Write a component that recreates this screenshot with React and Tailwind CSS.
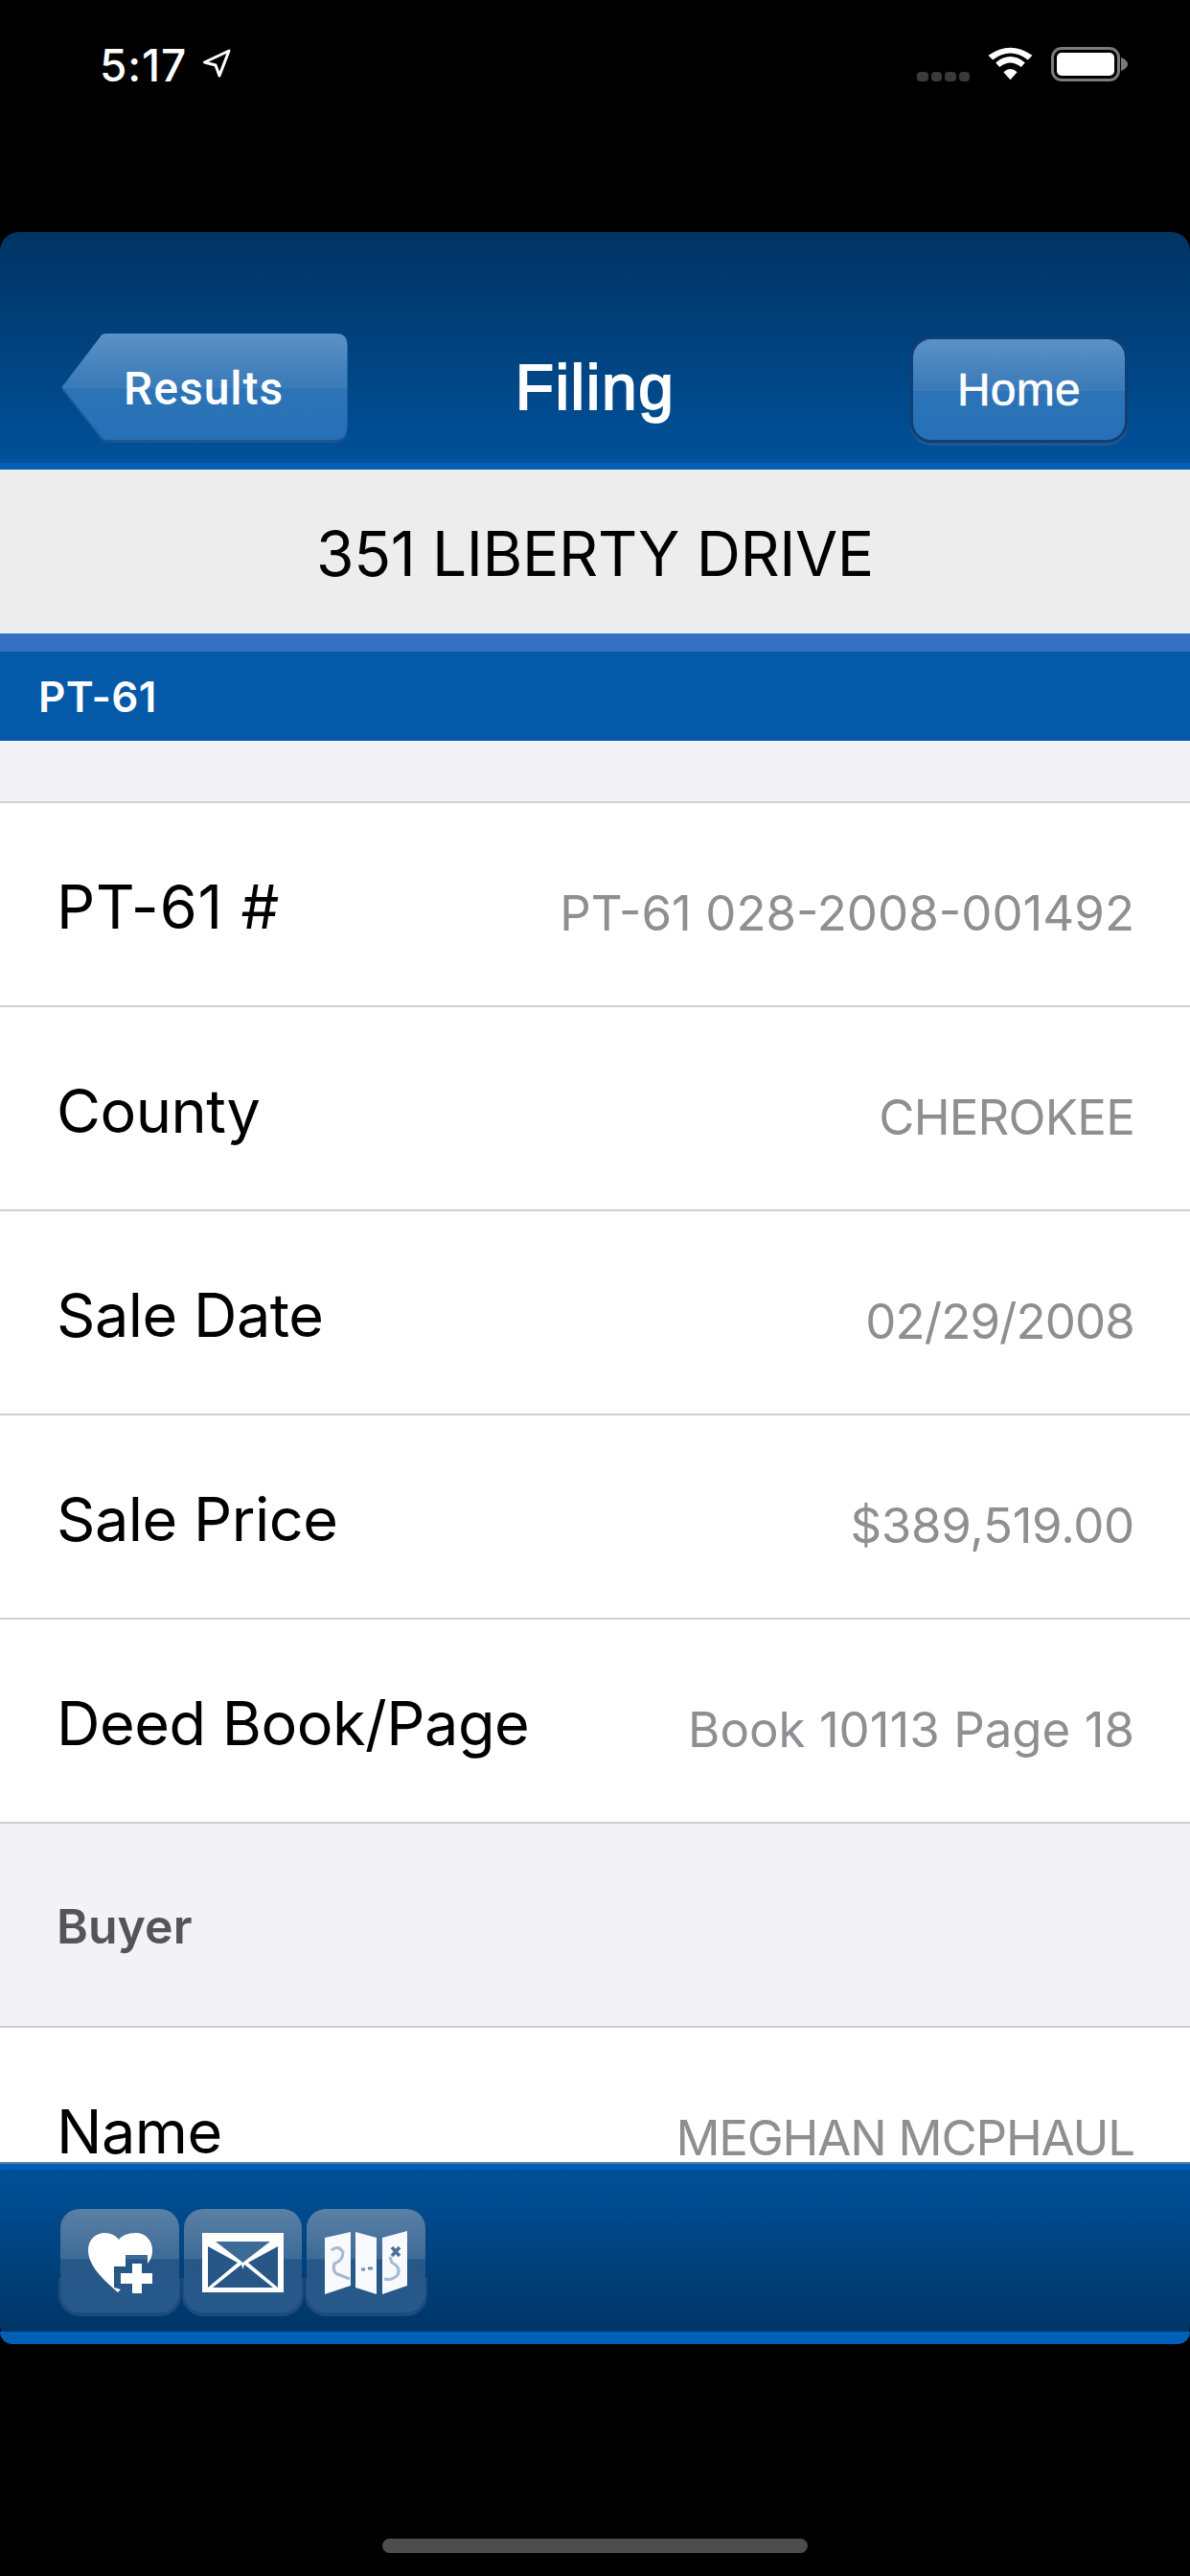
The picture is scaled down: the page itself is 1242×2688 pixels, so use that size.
import React from "react";

const sf = "font-['Inter','Liberation_Sans',sans-serif]";

function Row({ label, value, labelClass = "tracking-[-0.5px]", valueClass = "" }) {
  return (
    <div className="box-border flex h-[213px] shrink-0 items-baseline justify-between border-b-2 border-[#cfcfd3] bg-white pl-[59px] pr-[58px] pt-[77px]">
      <span className={`${sf} text-[63px] leading-none text-black ${labelClass}`}>{label}</span>
      <span className={`${sf} translate-y-[2px] text-[51px] leading-none text-[#8e8e93] ${valueClass}`}>{value}</span>
    </div>
  );
}

function Arrow() {
  return (
    <svg viewBox="0 0 30 30" className="ml-[16px] mt-[-5px] h-[30px] w-[30px]">
      <path d="M28 2 L2.5 14 L14 17 L18 28 Z" fill="#000" stroke="#fff" strokeWidth="3" strokeLinejoin="round" />
    </svg>
  );
}

function Wifi() {
  return (
    <svg width="47" height="36" viewBox="0 0 46 34">
      <path d="M23 33 L16 25 Q23 19 30 25 Z" fill="#fff" />
      <path d="M12 20 L8 15.5 Q23 3 38 15.5 L34 20 Q23 11 12 20 Z" fill="#fff" />
      <path d="M5 12.5 L0.5 8 Q23 -8 45.5 8 L41 12.5 Q23 -1 5 12.5 Z" fill="#fff" />
    </svg>
  );
}

function Battery() {
  return (
    <div className="flex items-center">
      <div className="box-border h-[36px] w-[72px] rounded-[11px] border-[3px] border-[#7b7b7b] p-[3px]">
        <div className="h-full w-full rounded-[5px] bg-white" />
      </div>
      <svg width="7" height="14" viewBox="0 0 7 14" className="ml-[1px]">
        <path d="M0 0 Q7 3 7 7 Q7 11 0 14 Z" fill="#7b7b7b" />
      </svg>
    </div>
  );
}

function StatusBar() {
  return (
    <div className="flex h-[242px] shrink-0 items-start justify-between bg-black pl-[104px] pr-[65px] pt-[48px]">
      <div className="flex items-center">
        <span className={`${sf} text-[46px] font-medium leading-[40px] tracking-[0.8px] text-white`}>5:17</span>
        <Arrow />
      </div>
      <div className="flex items-start pt-[1px]">
        <div className="mr-[19px] mt-[26px] flex gap-[3px]">
          <div className="h-[10px] w-[11.5px] rounded-[4px] bg-[#3a3a3a]" />
          <div className="h-[10px] w-[11.5px] rounded-[4px] bg-[#3a3a3a]" />
          <div className="h-[10px] w-[11.5px] rounded-[4px] bg-[#3a3a3a]" />
          <div className="h-[10px] w-[11.5px] rounded-[4px] bg-[#3a3a3a]" />
        </div>
        <Wifi />
        <div className="ml-[19px]"><Battery /></div>
      </div>
    </div>
  );
}

function BackButton() {
  return (
    <div className="relative h-[114px] w-[303px]">
      <svg viewBox="0 0 302 114" className="absolute inset-0 h-full w-full">
        <defs>
          <linearGradient id="btn" x1="0" y1="0" x2="0" y2="1">
            <stop offset="0" stopColor="#5a92c6" />
            <stop offset="0.495" stopColor="#3a7ab8" />
            <stop offset="0.505" stopColor="#3f80bc" />
            <stop offset="0.52" stopColor="#2c74b6" />
            <stop offset="1" stopColor="#2570b7" />
          </linearGradient>
        </defs>
        <path d="M2 59 L44 3 Q46 2 50 2 L288 2 Q300 2 300 14 L300 99 Q300 114 286 114 L50 114 Q46 114 44 112 Z" fill="#1d5590" />
        <path d="M2 56 L44 1 Q46 0 50 0 L288 0 Q300 0 300 12 L300 96 Q300 111 286 111 L50 111 Q46 111 44 109 Z" fill="url(#btn)" />
      </svg>
      <span className="absolute left-[67px] top-[1px] flex h-[114px] items-center font-['Roboto',sans-serif] text-[48px] font-medium tracking-[1px] text-white">Results</span>
    </div>
  );
}

function Header() {
  return (
    <div className="relative flex h-[248px] shrink-0 items-start justify-between rounded-t-[20px] bg-gradient-to-b from-[#003464] to-[#00529c] pl-[62px] pr-[65px] pt-[106px]">
      <BackButton />
      <span className="absolute left-0 right-0 top-[124px] text-center font-['Liberation_Sans',sans-serif] text-[66px] leading-[76px] tracking-[1.5px] text-white [-webkit-text-stroke:1.8px_white]">Filing</span>
      <div className="mt-[3px] box-border flex h-[111px] w-[227px] items-center justify-center rounded-[22px] border-[3px] border-[#0f3f75] bg-[linear-gradient(#5a92c6,#3a7ab8_49%,#3f80bc_50%,#2c74b6_52%,#2570b7)] shadow-[0_3px_0_#23588f] font-['Liberation_Sans',sans-serif] text-[48px] tracking-[0.3px] text-white [-webkit-text-stroke:0.6px_white]">Home</div>
      <div className="absolute bottom-0 left-0 right-0 h-[7px] bg-[#0060b8]" />
    </div>
  );
}

function IconButton({ children }) {
  return (
    <div className="relative h-[112px] w-[123.5px]">
      <div className="absolute bottom-0 left-[-2px] right-[-2px] h-[40px] rounded-b-[22px] bg-[#1d4a7f]" />
      <div className="absolute left-0 right-0 top-0 flex h-[108px] items-center justify-center rounded-[20px] bg-[linear-gradient(#5a80a5,#3d6b97_48%,#265787_49%,#27598a)]">
        {children}
      </div>
    </div>
  );
}

function HeartIcon() {
  return (
    <svg width="67" height="63" viewBox="0 0 67 63" className="ml-[2px] mt-[5px]">
      <path d="M31 62 C20 52 0 36 0 18 C0 6 9 0 17 0 C24 0 29 3 32 7 C35 3 41 0 50 0 C59 0 67 7 67 18 C67 25 65 28 62 32 L62 23 L39 23 L39 35 L27 35 L27 57 L34 59 Z" fill="#fff" />
      <path d="M46 32 L56 32 L56 42 L67 42 L67 53 L56 53 L56 63 L46 63 L46 53 L34 53 L34 42 L46 42 Z" fill="#fff" />
    </svg>
  );
}

function MailIcon() {
  return (
    <svg width="85" height="62" viewBox="0 0 85 62" className="mt-[4px]">
      <rect x="0" y="0" width="85" height="62" fill="#fff" />
      <path d="M6 14 L6 57 L37 31 Z" fill="#265787" />
      <path d="M79 14 L79 57 L48 31 Z" fill="#265787" />
      <path d="M14 9 L71 9 L42.5 31 Z" fill="#3d6b97" />
      <path d="M11 57 L41 33 L42.5 38 L44 33 L74 57 Z" fill="#265787" />
    </svg>
  );
}

function MapIcon() {
  return (
    <svg width="86" height="66" viewBox="0 0 86 66" className="mt-[4px]">
      <defs>
        <filter id="soft"><feGaussianBlur stdDeviation="0.7" /></filter>
      </defs>
      <g filter="url(#soft)">
        <path d="M0 7 L27 1 L27 57 L0 66 Z" fill="#f7f9fc" />
        <path d="M32 1 L54 7 L54 66 L32 59 Z" fill="#f7f9fc" />
        <path d="M60 7 L86 0 L86 57 L60 66 Z" fill="#f7f9fc" />
        <g fill="none" stroke="#a3bad2" strokeWidth="3">
          <path d="M7 20 Q14 14 19 22 Q19 31 10 34 Q7 44 16 46 L26 50" />
          <path d="M38 40 L42 40 M45 39 L50 39" stroke="#6e90b3" />
          <path d="M62 50 Q70 52 76 46 Q80 38 70 33 L68 27" />
          <path d="M70 17 L78 26 M78 17 L70 26" stroke="#4a7199" strokeWidth="3.5" />
        </g>
      </g>
    </svg>
  );
}

function Footer() {
  return (
    <div className="relative flex h-[190px] shrink-0 items-start gap-[5px] rounded-b-[20px] bg-gradient-to-b from-[#00529c] to-[#003464] pl-[63px] pt-[49px]">
      <div className="absolute left-0 right-0 top-0 h-[8px] border-t-2 border-[#5f7f9f] bg-[#0060b8]" />
      <IconButton><HeartIcon /></IconButton>
      <IconButton><MailIcon /></IconButton>
      <IconButton><MapIcon /></IconButton>
      <div className="absolute bottom-0 left-0 right-0 h-[13px] rounded-b-[20px] bg-[#0060b8]" />
    </div>
  );
}

export default function App() {
  return (
    <div className="flex h-[2688px] w-[1242px] flex-col overflow-hidden bg-black">
      <StatusBar />
      <Header />
      <div className={`${sf} flex h-[171px] shrink-0 items-center justify-center bg-[#ededed] pt-[5px] text-[64px] tracking-[-0.4px] text-black`}>351 LIBERTY DRIVE</div>
      <div className="h-[19px] shrink-0 bg-[#3370c4]" />
      <div className={`${sf} flex h-[93px] shrink-0 items-center bg-[#0459a8] pl-[40px] text-[44px] font-semibold tracking-[0.3px] text-white`}>PT-61</div>
      <div className="flex min-h-0 flex-1 flex-col overflow-hidden bg-[#f2f2f7]">
        <div className="box-border h-[65px] shrink-0 border-b-2 border-[#cfcfd3]" />
        <Row label="PT-61 #" labelClass="tracking-[0.8px]" value="PT-61 028-2008-001492" />
        <Row label="County" value="CHEROKEE" valueClass="tracking-[-0.8px]" />
        <Row label="Sale Date" value="02/29/2008" valueClass="tracking-[-0.9px]" />
        <Row label="Sale Price" value="$389,519.00" valueClass="tracking-[-0.3px]" />
        <Row label="Deed Book/Page" value="Book 10113 Page 18" />
        <div className={`${sf} box-border flex h-[213px] shrink-0 items-center border-b-2 border-[#cfcfd3] pb-[2px] pl-[59px] pt-[6px] text-[50px] font-semibold text-[#555559]`}>Buyer</div>
        <Row label="Name" value="MEGHAN MCPHAUL" valueClass="tracking-[-1.2px]" />
      </div>
      <Footer />
      <div className="relative h-[242px] shrink-0 bg-black">
        <div className="absolute bottom-[24px] left-[399px] h-[15px] w-[444px] rounded-[8px] bg-[#4d4d4d]" />
      </div>
    </div>
  );
}
